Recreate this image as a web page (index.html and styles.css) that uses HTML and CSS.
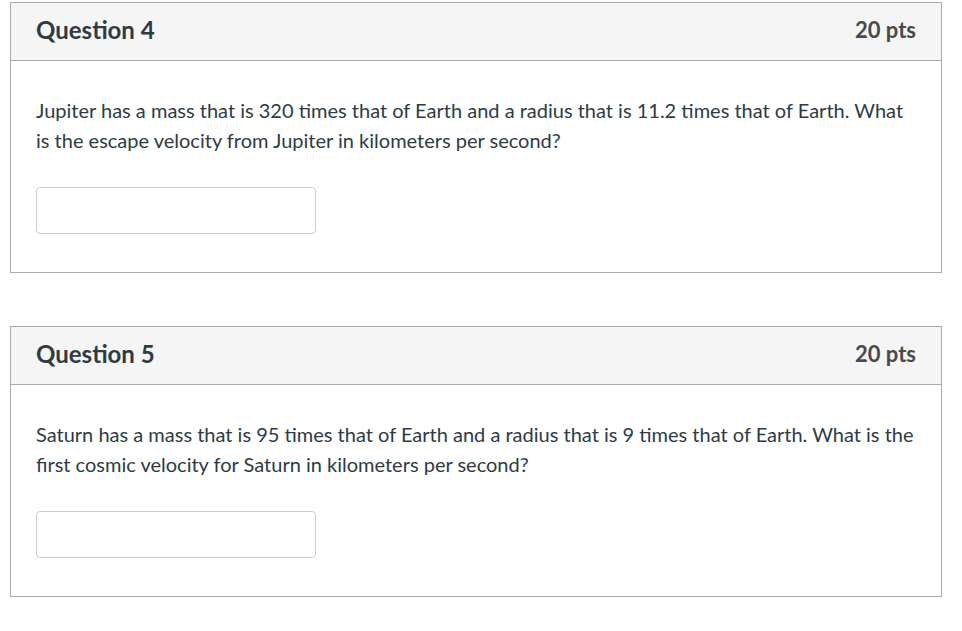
FILE: index.html
```html
<!DOCTYPE html>
<html>
<head>
<meta charset="utf-8">
<link rel="stylesheet" href="styles.css">
</head>
<body>
<div class="quiz">
  <div class="question">
    <div class="q-header">
      <span class="q-title">Question 4</span>
      <span class="q-pts">20 pts</span>
    </div>
    <div class="q-body">
      <p class="q-text">Jupiter has a mass that is 320 times that of Earth and a radius that is 11.2 times that of Earth. What is the escape velocity from Jupiter in kilometers per second?</p>
      <input class="q-input" type="text">
    </div>
  </div>
  <div class="question">
    <div class="q-header">
      <span class="q-title">Question 5</span>
      <span class="q-pts">20 pts</span>
    </div>
    <div class="q-body">
      <p class="q-text">Saturn has a mass that is 95 times that of Earth and a radius that is 9 times that of Earth. What is the first cosmic velocity for Saturn in kilometers per second?</p>
      <input class="q-input" type="text">
    </div>
  </div>
</div>
</body>
</html>
```
FILE: styles.css
```css
html, body {
  margin: 0;
  padding: 0;
  background: #fff;
}
body {
  font-family: Lato, "Liberation Sans", sans-serif;
  color: #2d3b45;
}
.quiz {
  display: flex;
  flex-direction: column;
  gap: 53px;
  padding: 2px 20px 0 10px;
}
.question {
  border: 1px solid #aaaaaa;
}
.q-header {
  display: flex;
  justify-content: space-between;
  align-items: center;
  box-sizing: border-box;
  height: 58px;
  padding: 0 25px 4px;
  background: #f5f5f5;
  border-bottom: 1px solid #aaaaaa;
}
.q-title {
  font-weight: 700;
  font-size: 24px;
  color: #2d3b45;
}
.q-pts {
  font-weight: 700;
  font-size: 22px;
  color: #4a4a4a;
}
.q-body {
  padding: 34px 25px 38px;
}
.q-text {
  margin: 0 0 32px;
  font-size: 20px;
  line-height: 30px;
}
.q-input {
  display: block;
  box-sizing: border-box;
  width: 280px;
  height: 47px;
  margin: 0;
  border: 1px solid #c7cdd1;
  border-radius: 4px;
  background: #fff;
}
```
